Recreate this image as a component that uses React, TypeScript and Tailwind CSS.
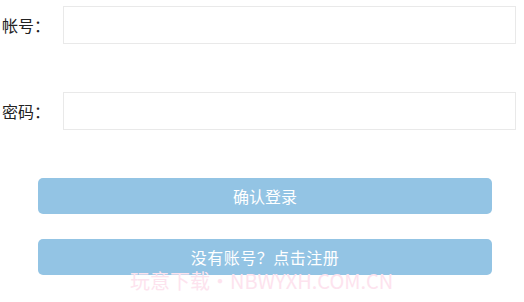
import React from "react";

export default function App() {
  const font = { fontFamily: '"Noto Sans CJK SC", "Noto Sans", sans-serif' };
  return (
    <div className="relative w-[524px] h-[302px] bg-white overflow-hidden" style={font}>
      <div className="flex flex-col pt-[6px]">
        <div className="flex items-center h-[38px]">
          <span className="w-[63px] pl-[2px] text-[16px] text-[#222]">帐号：</span>
          <div className="w-[453px] h-[38px] border border-[#e9e9e9] bg-white" />
        </div>
        <div className="flex items-center h-[38px] mt-[48px]">
          <span className="w-[63px] pl-[2px] text-[16px] text-[#222]">密码：</span>
          <div className="w-[453px] h-[38px] border border-[#e9e9e9] bg-white" />
        </div>
        <div className="flex flex-col pl-[38px] mt-[48px] gap-[25px]">
          <div className="w-[454px] h-[36px] rounded-[5px] bg-[#93c4e4] flex items-center justify-center text-white text-[16px]">
            确认登录
          </div>
          <div className="w-[454px] h-[36px] rounded-[5px] bg-[#93c4e4] flex items-center justify-center text-white text-[16px] tracking-[0.5px]">
            没有账号？点击注册
          </div>
        </div>
      </div>
      <div className="absolute left-[130px] top-[269px] text-[20px] leading-[24px] text-[#fde3ee] whitespace-nowrap">
        玩意下载・NBWYXH.COM.CN
      </div>
    </div>
  );
}
